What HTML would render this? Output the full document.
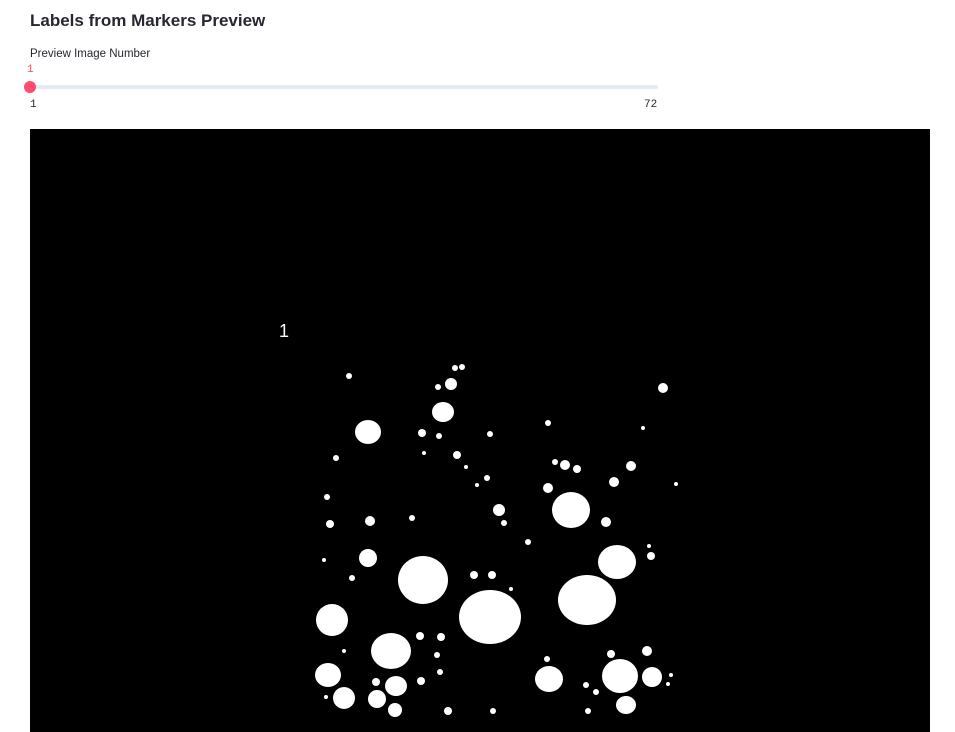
<!DOCTYPE html>
<html><head><style>
body{margin:0;width:955px;height:732px;overflow:hidden;background:#fff;font-family:"Liberation Sans",sans-serif;position:relative}
.t{position:absolute;left:30px;top:11px;font-size:17px;font-weight:bold;color:#262730}
.l{position:absolute;left:30px;top:48px;font-size:11.5px;color:#262730}
.v{position:absolute;left:27px;top:64px;font-size:11px;color:#ff4b4b;font-family:"Liberation Mono",monospace}
.track{position:absolute;left:30px;top:85px;width:628px;height:4px;background:#e6eaf1;border-radius:2px}
.th{position:absolute;left:24px;top:81px;width:12px;height:12px;border-radius:50%;background:#ff4b6e}
.mn{position:absolute;left:30px;top:99px;font-size:11px;color:#262730;font-family:"Liberation Mono",monospace}
.mx{position:absolute;left:644px;top:99px;font-size:11px;color:#262730;font-family:"Liberation Mono",monospace}
svg{position:absolute;left:0;top:0}
</style></head><body>
<div class="t">Labels from Markers Preview</div>
<div class="l">Preview Image Number</div>
<div class="v">1</div>
<div class="track"></div><div class="th"></div>
<div class="mn">1</div><div class="mx">72</div>
<svg width="955" height="732">
<rect x="30" y="129" width="900" height="603" fill="#000"/>
<text x="279" y="337" fill="#fff" font-size="18" font-family="Liberation Sans">1</text>
<g fill="#fff">
<ellipse cx="423" cy="580" rx="25" ry="24"/><ellipse cx="490" cy="617" rx="31" ry="27"/>
<ellipse cx="587" cy="600" rx="29" ry="25"/><ellipse cx="617" cy="562" rx="19" ry="17"/>
<ellipse cx="571" cy="510" rx="19" ry="18"/><ellipse cx="391" cy="651" rx="20" ry="18"/>
<ellipse cx="332" cy="620" rx="16" ry="16"/><ellipse cx="620" cy="676" rx="18" ry="17"/>
<ellipse cx="368" cy="432" rx="13" ry="12"/><ellipse cx="443" cy="412" rx="11" ry="10"/>
<ellipse cx="549" cy="679" rx="14" ry="13"/><ellipse cx="328" cy="675" rx="13" ry="12"/>
<ellipse cx="344" cy="698" rx="11" ry="11"/><ellipse cx="396" cy="686" rx="11" ry="10"/>
<ellipse cx="377" cy="699" rx="9" ry="9"/><ellipse cx="626" cy="705" rx="10" ry="9"/>
<ellipse cx="652" cy="677" rx="10" ry="10"/><ellipse cx="368" cy="558" rx="9" ry="9"/>
<circle cx="349" cy="376" r="3"/><circle cx="451" cy="384" r="6"/><circle cx="455" cy="368" r="3"/><circle cx="462" cy="367" r="3"/><circle cx="438" cy="387" r="3"/><circle cx="663" cy="388" r="5"/><circle cx="422" cy="433" r="4"/><circle cx="439" cy="436" r="3"/><circle cx="490" cy="434" r="3"/><circle cx="548" cy="423" r="3"/><circle cx="643" cy="428" r="2"/><circle cx="336" cy="458" r="3"/><circle cx="424" cy="453" r="2"/><circle cx="457" cy="455" r="4"/><circle cx="466" cy="467" r="2"/><circle cx="487" cy="478" r="3"/><circle cx="477" cy="485" r="2"/><circle cx="555" cy="462" r="3"/><circle cx="565" cy="465" r="5"/><circle cx="577" cy="469" r="4"/><circle cx="631" cy="466" r="5"/><circle cx="614" cy="482" r="5"/><circle cx="548" cy="488" r="5"/><circle cx="676" cy="484" r="2"/><circle cx="327" cy="497" r="3"/><circle cx="370" cy="521" r="5"/><circle cx="330" cy="524" r="4"/><circle cx="412" cy="518" r="3"/><circle cx="499" cy="510" r="6"/><circle cx="504" cy="523" r="3"/><circle cx="606" cy="522" r="5"/><circle cx="528" cy="542" r="3"/><circle cx="649" cy="546" r="2"/><circle cx="651" cy="556" r="4"/><circle cx="324" cy="560" r="2"/><circle cx="352" cy="578" r="3"/><circle cx="474" cy="575" r="4"/><circle cx="492" cy="575" r="4"/><circle cx="511" cy="589" r="2"/><circle cx="420" cy="636" r="4"/><circle cx="441" cy="637" r="4"/><circle cx="344" cy="651" r="2"/><circle cx="547" cy="659" r="3"/><circle cx="611" cy="654" r="4"/><circle cx="647" cy="651" r="5"/><circle cx="437" cy="655" r="3"/><circle cx="440" cy="672" r="3"/><circle cx="421" cy="681" r="4"/><circle cx="376" cy="682" r="4"/><circle cx="586" cy="685" r="3"/><circle cx="596" cy="692" r="3"/><circle cx="671" cy="675" r="2"/><circle cx="668" cy="684" r="2"/><circle cx="326" cy="697" r="2"/><circle cx="395" cy="710" r="7"/><circle cx="448" cy="711" r="4"/><circle cx="493" cy="711" r="3"/><circle cx="588" cy="711" r="3"/>
</g>
</svg>
</body></html>
